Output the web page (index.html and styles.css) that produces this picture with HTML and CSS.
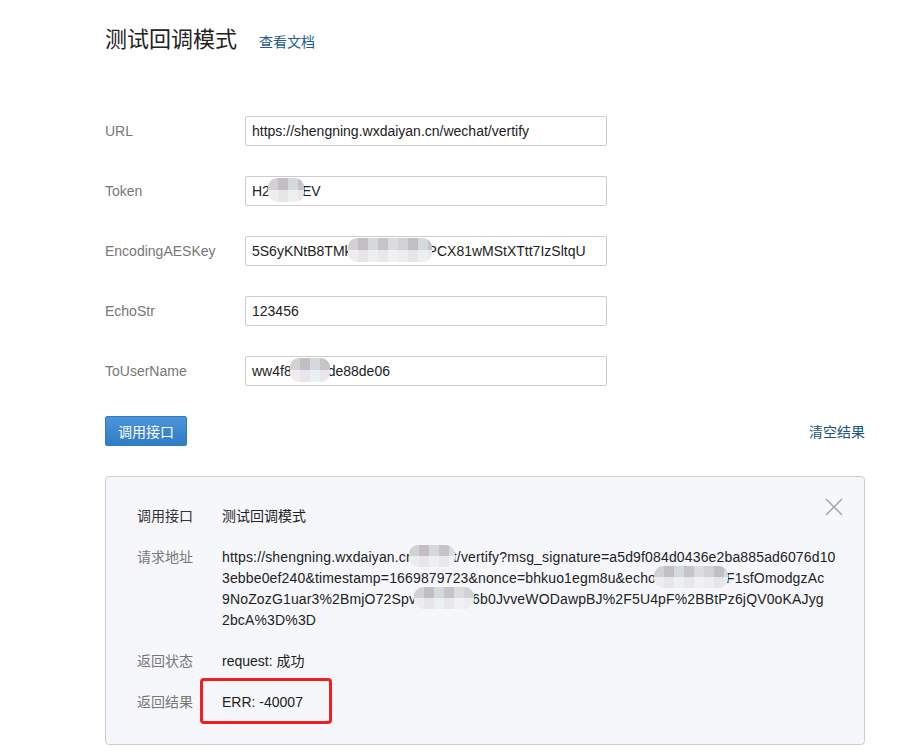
FILE: index.html
```html
<!DOCTYPE html>
<html lang="zh-CN">
<head>
<meta charset="utf-8">
<title>测试回调模式</title>
<link rel="stylesheet" href="styles.css">
</head>
<body>
<div class="page">
  <div class="header">
    <h1 class="title">测试回调模式</h1>
    <a class="doc-link" href="#">查看文档</a>
  </div>

  <div class="form">
    <div class="row">
      <label class="label">URL</label>
      <div class="input">https://shengning.wxdaiyan.cn/wechat/vertify</div>
    </div>
    <div class="row">
      <label class="label">Token</label>
      <div class="input">H2<span class="mosaic m-token"></span>EV</div>
    </div>
    <div class="row">
      <label class="label">EncodingAESKey</label>
      <div class="input">5S6yKNtB8TMk<span class="mosaic m-aes"></span>PCX81wMStXTtt7IzSltqU</div>
    </div>
    <div class="row">
      <label class="label">EchoStr</label>
      <div class="input">123456</div>
    </div>
    <div class="row">
      <label class="label">ToUserName</label>
      <div class="input">ww4f8<span class="mosaic m-user"></span>de88de06</div>
    </div>
  </div>

  <div class="actions">
    <button class="btn-primary">调用接口</button>
    <a class="clear-link" href="#">清空结果</a>
  </div>

  <div class="result">
    <span class="close" aria-label="关闭">
      <svg width="20" height="20" viewBox="0 0 20 20"><path d="M2 2 L18 18 M18 2 L2 18" stroke="#a9a9a9" stroke-width="1.6" fill="none"/></svg>
    </span>
    <div class="r-row">
      <div class="r-label dark">调用接口</div>
      <div class="r-value">测试回调模式</div>
    </div>
    <div class="r-row">
      <div class="r-label">请求地址</div>
      <div class="r-value url">
        <span class="line">https://shengning.wxdaiyan.cr<span class="mosaic m-l1"></span>t/vertify?msg_signature=a5d9f084d0436e2ba885ad6076d10</span>
        <span class="line">3ebbe0ef240&amp;timestamp=1669879723&amp;nonce=bhkuo1egm8u&amp;echo<span class="mosaic m-l2"></span>F1sfOmodgzAc</span>
        <span class="line">9NoZozG1uar3%2BmjO72Spv<span class="mosaic m-l3"></span>6b0JvveWODawpBJ%2F5U4pF%2BBtPz6jQV0oKAJyg</span>
        <span class="line">2bcA%3D%3D</span>
      </div>
    </div>
    <div class="r-row">
      <div class="r-label">返回状态</div>
      <div class="r-value">request: 成功</div>
    </div>
    <div class="r-row">
      <div class="r-label">返回结果</div>
      <div class="r-value"><span class="highlight">ERR: -40007</span></div>
    </div>
  </div>
</div>
</body>
</html>
```

FILE: styles.css
```css
* { box-sizing: border-box; }

html, body {
  margin: 0;
  padding: 0;
  background: #ffffff;
}

body {
  font-family: "Liberation Sans", Arial, "Noto Sans CJK SC", sans-serif;
  font-size: 14px;
  color: #333333;
}

.page {
  width: 760px;
  margin-left: 105px;
  padding-top: 25px;
}

.header {
  display: flex;
  align-items: baseline;
  gap: 22px;
  height: 30px;
}

.title {
  margin: 0;
  font-size: 22px;
  font-weight: normal;
  color: #222222;
  line-height: 30px;
}

.doc-link {
  color: #1b5a92;
  text-decoration: none;
  font-size: 14px;
}

.form {
  margin-top: 61px;
  display: flex;
  flex-direction: column;
  gap: 30px;
}

.row {
  display: flex;
  align-items: center;
  height: 30px;
}

.label {
  width: 140px;
  color: #777777;
  font-size: 14px;
}

.input {
  width: 362px;
  height: 30px;
  border: 1px solid #cccccc;
  border-radius: 2px;
  padding: 0 6px;
  line-height: 28px;
  color: #222222;
  font-size: 14px;
  white-space: nowrap;
  overflow: hidden;
  background: #fff;
}

.mosaic {
  display: inline-block;
  vertical-align: middle;
  height: 24px;
  margin-top: -4px;
  border-radius: 9px;
  filter: blur(0.7px);
  background:
    linear-gradient(to bottom, rgba(255,255,255,0) 48%, rgba(255,255,255,0.6) 52%),
    repeating-linear-gradient(to right,
      #d2d2d4 0 10px, #c2bec3 10px 20px, #d3d9dc 20px 30px, #c8c3c8 30px 40px, #dcdcde 40px 50px);
}

.m-token { width: 36px; margin-left: -2px; margin-right: -2px; }
.m-aes { width: 84px; margin-left: -4px; margin-right: -4px; }
.m-user { width: 40px; margin-left: -2px; margin-right: -2px; }
.m-l1 { width: 46px; height: 22px; margin-left: -2px; margin-right: -2px; }
.m-l2 { width: 74px; height: 22px; margin-left: -2px; margin-right: -2px; }
.m-l3 { width: 60px; height: 22px; margin-left: -2px; margin-right: -2px; }

.actions {
  margin-top: 30px;
  display: flex;
  justify-content: space-between;
  align-items: center;
  height: 30px;
}

.btn-primary {
  width: 82px;
  height: 30px;
  border: 1px solid #2e7bbf;
  border-radius: 2px;
  background: linear-gradient(to bottom, #4b94dc, #2f7dc2);
  color: #ffffff;
  font-family: "Liberation Sans", "Noto Sans CJK SC", sans-serif;
  font-size: 14px;
  padding: 0;
  cursor: pointer;
}

.clear-link {
  color: #1b5485;
  text-decoration: none;
  font-size: 14px;
}

.result {
  position: relative;
  margin-top: 30px;
  border: 1px solid #c9cdd4;
  border-radius: 4px;
  background: #f6f7fb;
  padding: 29px 31px 31px 31px;
  display: flex;
  flex-direction: column;
  gap: 20px;
  min-height: 269px;
}

.close {
  position: absolute;
  top: 20px;
  right: 20px;
  width: 20px;
  height: 20px;
  display: block;
}

.close svg { display: block; }

.r-row {
  display: flex;
  line-height: 21px;
}

.r-label {
  width: 85px;
  flex: none;
  color: #777777;
}

.r-label.dark { color: #333333; }

.r-value {
  color: #222222;
}

.r-value.url {
  letter-spacing: 0.15px;
}

.line {
  display: block;
  white-space: nowrap;
}

.highlight {
  position: relative;
  display: inline-block;
}

.highlight::before {
  content: "";
  position: absolute;
  left: -22px;
  top: -14px;
  width: 126px;
  height: 40px;
  border: 3px solid #f01e1e;
  border-radius: 4px;
}
```
